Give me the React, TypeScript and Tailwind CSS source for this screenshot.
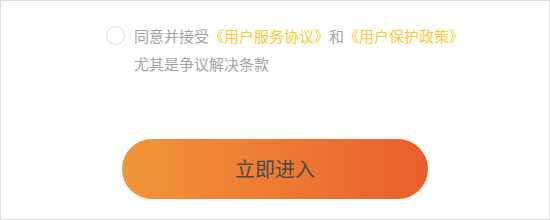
export default function App() {
  return (
    <div
      className="w-[550px] h-[220px] border border-[#dddddd] bg-white"
      style={{ fontFamily: '"Noto Sans CJK SC", "Noto Sans", sans-serif' }}
    >
      <div className="flex items-start gap-[9px] pl-[105px] pt-[21px]">
        <span className="mt-[4px] h-[19px] w-[19px] shrink-0 rounded-full border border-[#dcdcdc]" />
        <p className="text-[15px] leading-[28px] text-[#a3a3a3]">
          同意并接受<span className="text-[#fbc935]">《用户服务协议》</span>和
          <span className="text-[#fbc935]">《用户保护政策》</span>
          <br />
          尤其是争议解决条款
        </p>
      </div>
      <button
        type="button"
        className="mx-auto mt-[61px] flex h-[60px] w-[306px] items-center justify-center rounded-full bg-gradient-to-r from-[#f19539] to-[#e85e2a] text-[20px] text-[#4a4a4a]"
      >
        立即进入
      </button>
    </div>
  );
}
